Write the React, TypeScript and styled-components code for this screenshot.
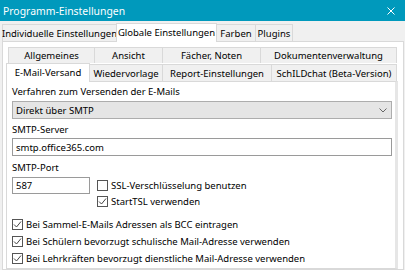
import React from 'react';
import styled, { createGlobalStyle } from 'styled-components';

const GlobalStyle = createGlobalStyle`
    html, body {
        margin: 0;
        padding: 0;
        background: #f0f0f0;
    }
    body {
        font-family: 'Noto Sans', 'Open Sans', sans-serif;
    }
`;

const Window = styled.div`
    width: 405px;
    height: 270px;
    overflow: hidden;
    display: flex;
    flex-direction: column;
    background: #f0f0f0;
    color: #000;
    font-size: 9.5px;
`;

const TitleBar = styled.div`
    height: 21px;
    flex: none;
    display: flex;
    align-items: center;
    justify-content: space-between;
    padding: 0 10px 0 3px;
    background: #0099bc;
    color: #fff;
    font-size: 10.4px;
`;

const TabStrip = styled.div<{ $inset?: number }>`
    display: flex;
    align-items: flex-end;
    padding-left: ${(p) => p.$inset ?? 0}px;
    position: relative;
`;

const TopStrip = styled(TabStrip)`
    height: 20px;
    flex: none;
`;

const Tab = styled.div<{ $w: number; $active?: boolean; $h: number }>`
    width: ${(p) => p.$w}px;
    height: ${(p) => (p.$active ? p.$h + 2 : p.$h)}px;
    box-sizing: border-box;
    display: flex;
    align-items: center;
    justify-content: center;
    white-space: nowrap;
    border: 1px solid #d9d9d9;
    border-bottom: none;
    margin-left: -1px;
    background: ${(p) => (p.$active ? '#fff' : '#f0f0f0')};
    margin-bottom: ${(p) => (p.$active ? -1 : 0)}px;
    z-index: ${(p) => (p.$active ? 1 : 0)};
    position: relative;
    padding-bottom: ${(p) => (p.$active ? 1 : 0)}px;
    &:first-child {
        margin-left: 0;
    }
`;

const OuterPage = styled.div`
    flex: 1;
    margin: 0 1px 0 2px;
    background: #fff;
    border: 1px solid #d9d9d9;
    padding: 5px 5px 0 3px;
    display: flex;
    flex-direction: column;
    min-height: 0;
`;

const InnerPanel = styled.div`
    flex: 1;
    border: 1px solid #d9d9d9;
    border-right: 3px solid #e6e6e6;
    background: #fff;
    padding: 4px 3px 0 5px;
    display: flex;
    flex-direction: column;
`;

const Label = styled.div<{ $gap: number }>`
    line-height: 12px;
    margin-top: ${(p) => p.$gap}px;
`;

const Select = styled.div`
    height: 18px;
    box-sizing: border-box;
    margin-top: 3px;
    border: 1px solid #adadad;
    background: #e5e5e5;
    display: flex;
    align-items: center;
    justify-content: space-between;
    padding: 0 4px 0 3px;
`;

const TextBox = styled.div<{ $w?: number; $h: number }>`
    width: ${(p) => (p.$w ? `${p.$w}px` : 'auto')};
    height: ${(p) => p.$h}px;
    box-sizing: border-box;
    border: 1px solid #9a9a9a;
    background: #fff;
    display: flex;
    align-items: center;
    padding-left: 3px;
    flex: none;
`;

const ServerBox = styled(TextBox)`
    margin-top: 2px;
`;

const PortRow = styled.div`
    display: flex;
    align-items: flex-start;
    gap: 7px;
    margin-top: 3px;
`;

const CheckList = styled.div<{ $row: number; $gap?: number }>`
    display: flex;
    flex-direction: column;
    margin-top: ${(p) => p.$gap ?? 0}px;
    & > label {
        height: ${(p) => p.$row}px;
    }
`;

const CheckRow = styled.label`
    display: flex;
    align-items: center;
    gap: 3px;
    white-space: nowrap;
`;

const Box = styled.span`
    width: 11px;
    height: 11px;
    box-sizing: border-box;
    border: 1px solid #555;
    background: #fff;
    display: flex;
    align-items: center;
    justify-content: center;
    flex: none;
`;

function Check({ checked, children }: { checked?: boolean; children: React.ReactNode }) {
    return (
        <CheckRow>
            <Box>
                {checked && (
                    <svg width="9" height="9" viewBox="0 0 9 9">
                        <polyline points="1,4.5 3.5,7 8,1.5" fill="none" stroke="#444" strokeWidth="1" />
                    </svg>
                )}
            </Box>
            {children}
        </CheckRow>
    );
}

const topTabs = [
    { label: 'Individuelle Einstellungen', w: 115 },
    { label: 'Globale Einstellungen', w: 101, active: true },
    { label: 'Farben', w: 40 },
    { label: 'Plugins', w: 38 }
];

const rowOne = [
    { label: 'Allgemeines', w: 87 },
    { label: 'Ansicht', w: 69 },
    { label: 'Fächer, Noten', w: 99 },
    { label: 'Dokumentenverwaltung', w: 137 }
];

const rowTwo = [
    { label: 'E-Mail-Versand', w: 84, active: true },
    { label: 'Wiedervorlage', w: 74 },
    { label: 'Report-Einstellungen', w: 110 },
    { label: 'SchILDchat (Beta-Version)', w: 126 }
];

export default function App() {
    return (
        <Window>
            <GlobalStyle />
            <TitleBar>
                <span>Programm-Einstellungen</span>
                <svg width="8" height="8" viewBox="0 0 8 8">
                    <path d="M0.5 0.5 L7.5 7.5 M7.5 0.5 L0.5 7.5" stroke="#fff" strokeWidth="1" />
                </svg>
            </TitleBar>
            <TopStrip $inset={2}>
                {topTabs.map((t) => (
                    <Tab key={t.label} $w={t.w} $h={17} $active={t.active}>
                        {t.label}
                    </Tab>
                ))}
            </TopStrip>
            <OuterPage>
                <TabStrip $inset={2}>
                    {rowOne.map((t) => (
                        <Tab key={t.label} $w={t.w} $h={16}>
                            {t.label}
                        </Tab>
                    ))}
                </TabStrip>
                <TabStrip>
                    {rowTwo.map((t) => (
                        <Tab key={t.label} $w={t.w} $h={17} $active={t.active}>
                            {t.label}
                        </Tab>
                    ))}
                </TabStrip>
                <InnerPanel>
                    <Label $gap={0}>Verfahren zum Versenden der E-Mails</Label>
                    <Select>
                        <span>Direkt über SMTP</span>
                        <svg width="8" height="5" viewBox="0 0 8 5">
                            <polyline points="0.5,0.5 4,4 7.5,0.5" fill="none" stroke="#666" strokeWidth="1" />
                        </svg>
                    </Select>
                    <Label $gap={5}>SMTP-Server</Label>
                    <ServerBox $h={18}>smtp.office365.com</ServerBox>
                    <Label $gap={6}>SMTP-Port</Label>
                    <PortRow>
                        <TextBox $w={78} $h={17}>
                            587
                        </TextBox>
                        <CheckList $row={16}>
                            <Check>SSL-Verschlüsselung benutzen</Check>
                            <Check checked>StartTSL verwenden</Check>
                        </CheckList>
                    </PortRow>
                    <CheckList $row={17} $gap={7}>
                        <Check checked>Bei Sammel-E-Mails Adressen als BCC eintragen</Check>
                        <Check checked>Bei Schülern bevorzugt schulische Mail-Adresse verwenden</Check>
                        <Check checked>Bei Lehrkräften bevorzugt dienstliche Mail-Adresse verwenden</Check>
                    </CheckList>
                </InnerPanel>
            </OuterPage>
        </Window>
    );
}
